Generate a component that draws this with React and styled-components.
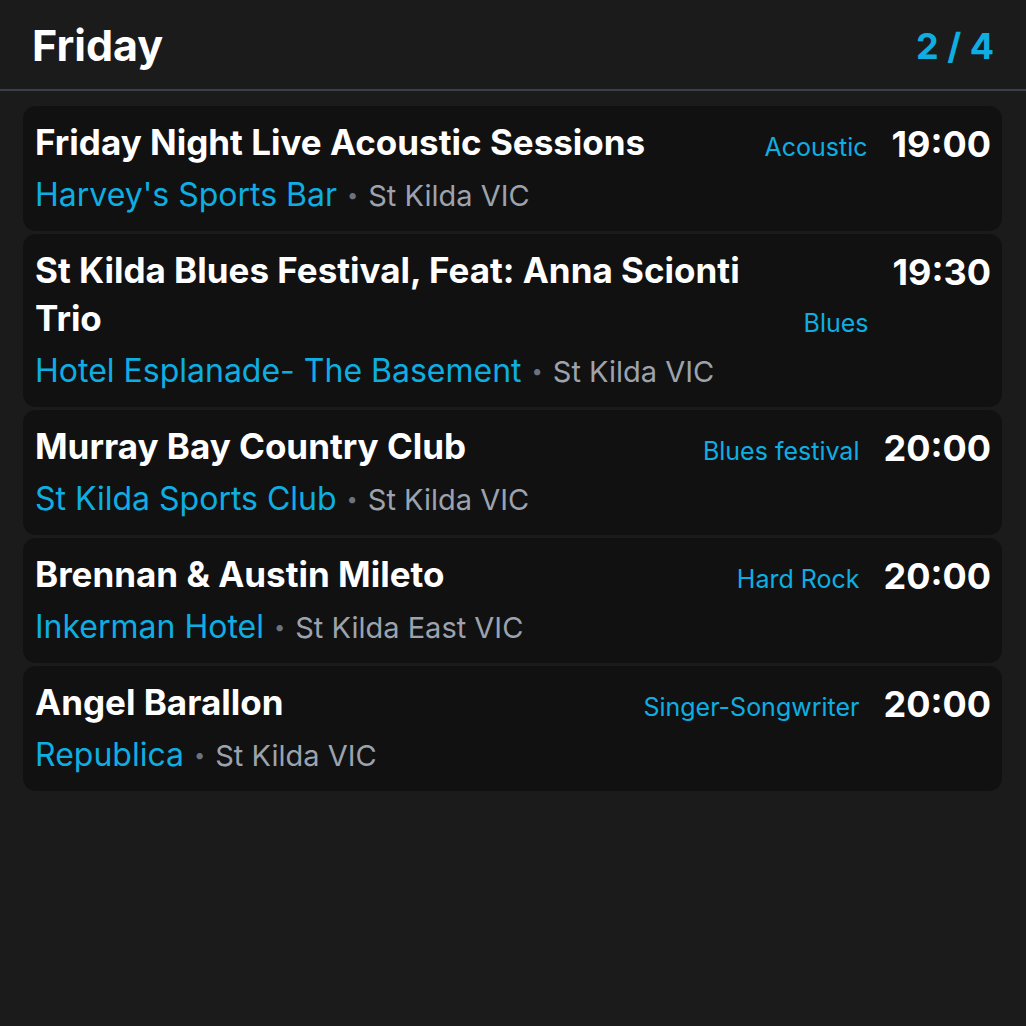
import React from "react";
import styled, { createGlobalStyle } from "styled-components";

const GlobalStyle = createGlobalStyle`
  html, body {
    margin: 0;
    padding: 0;
    background: #1b1b1b;
  }
  body {
    font-family: Inter, "Noto Sans", sans-serif;
    color: #ffffff;
  }
`;

const Page = styled.div`
  min-height: 1026px;
  background: #1b1b1b;
`;

const Header = styled.header`
  height: 89px;
  padding: 0 32px;
  display: flex;
  align-items: center;
  justify-content: space-between;
  border-bottom: 2px solid #3a3f4b;
`;

const DayTitle = styled.h1`
  margin: 0;
  font-size: 43px;
  font-weight: 700;
  line-height: 1;
  padding-top: 2px;
`;

const Pager = styled.div`
  font-size: 36px;
  font-weight: 700;
  color: #0eaee2;
  padding-top: 2px;
`;

const List = styled.div`
  padding: 15px 24px 16px 23px;
  display: flex;
  flex-direction: column;
  gap: 3px;
`;

const Card = styled.div`
  background: #111111;
  border-radius: 13px;
  padding: 12px 11px 12px 12px;
  display: flex;
  gap: 24px;
`;

const Main = styled.div`
  flex: 1;
  display: flex;
  flex-direction: column;
  gap: 5px;
`;

const TopRow = styled.div`
  display: flex;
  align-items: flex-end;
  gap: 24px;
`;

const Title = styled.div`
  flex: 1;
  font-size: 35px;
  font-weight: 700;
  line-height: 48px;
`;

const Tag = styled.div`
  font-size: 25px;
  line-height: 38px;
  color: #0eaee2;
  white-space: nowrap;
`;

const Venue = styled.div`
  font-size: 32px;
  line-height: 48px;
  height: 48px;
  white-space: nowrap;
`;

const VenueName = styled.span`
  color: #0eaee2;
`;

const Dot = styled.span`
  color: #6b7280;
  font-size: 20px;
  line-height: 1;
  margin: 0 10px;
  vertical-align: 4px;
`;

const Place = styled.span`
  color: #9ca3af;
  font-size: 29px;
  line-height: 1;
`;

const Time = styled.div`
  font-size: 36px;
  font-weight: 700;
  line-height: 52px;
  text-align: right;
`;

const events = [
  {
    title: "Friday Night Live Acoustic Sessions",
    tag: "Acoustic",
    time: "19:00",
    venue: "Harvey's Sports Bar",
    place: "St Kilda VIC",
  },
  {
    title: "St Kilda Blues Festival, Feat: Anna Scionti Trio",
    tag: "Blues",
    time: "19:30",
    venue: "Hotel Esplanade- The Basement",
    place: "St Kilda VIC",
  },
  {
    title: "Murray Bay Country Club",
    tag: "Blues festival",
    time: "20:00",
    venue: "St Kilda Sports Club",
    place: "St Kilda VIC",
  },
  {
    title: "Brennan & Austin Mileto",
    tag: "Hard Rock",
    time: "20:00",
    venue: "Inkerman Hotel",
    place: "St Kilda East VIC",
  },
  {
    title: "Angel Barallon",
    tag: "Singer-Songwriter",
    time: "20:00",
    venue: "Republica",
    place: "St Kilda VIC",
  },
];

export default function App() {
  return (
    <Page>
      <GlobalStyle />
      <Header>
        <DayTitle>Friday</DayTitle>
        <Pager>2 / 4</Pager>
      </Header>
      <List>
        {events.map((e, i) => (
          <Card key={i}>
            <Main>
              <TopRow>
                <Title>{e.title}</Title>
                <Tag>{e.tag}</Tag>
              </TopRow>
              <Venue>
                <VenueName>{e.venue}</VenueName>
                <Dot>•</Dot>
                <Place>{e.place}</Place>
              </Venue>
            </Main>
            <Time>{e.time}</Time>
          </Card>
        ))}
      </List>
    </Page>
  );
}
